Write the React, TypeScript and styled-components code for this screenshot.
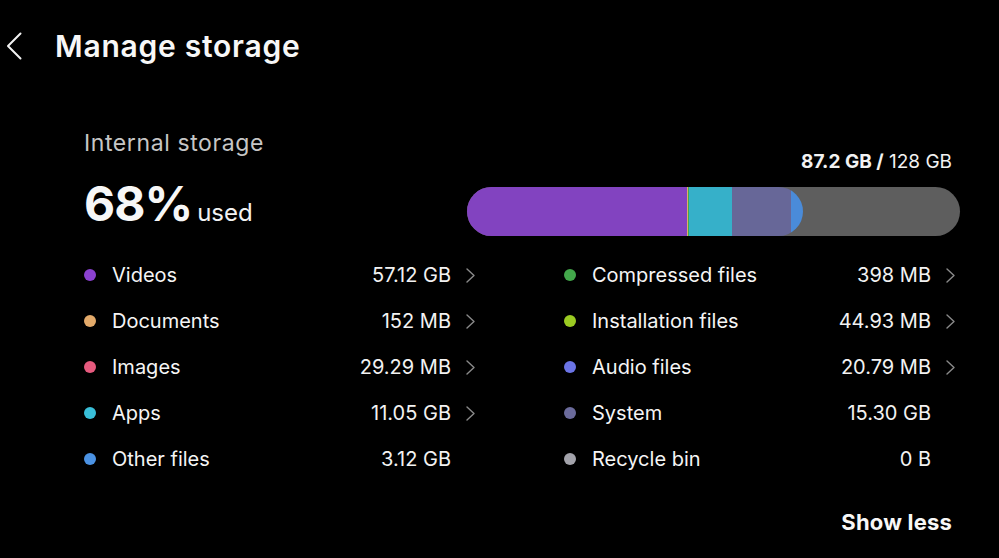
import * as React from 'react';
import styled, {createGlobalStyle} from 'styled-components';

const TOTAL_GB = 128;

interface ICategory {
  name: string;
  size: string;
  gb: number;
  color: string;
  link: boolean;
}

const left: ICategory[] = [
  {name: 'Videos', size: '57.12 GB', gb: 57.12, color: '#8b41d0', link: true},
  {name: 'Documents', size: '152 MB', gb: 0.152, color: '#e3aa6a', link: true},
  {name: 'Images', size: '29.29 MB', gb: 0.029, color: '#e65a7e', link: true},
  {name: 'Apps', size: '11.05 GB', gb: 11.05, color: '#39bfd9', link: true},
  {name: 'Other files', size: '3.12 GB', gb: 3.12, color: '#4b92e3', link: false},
];

const right: ICategory[] = [
  {name: 'Compressed files', size: '398 MB', gb: 0.398, color: '#43a84b', link: true},
  {name: 'Installation files', size: '44.93 MB', gb: 0.045, color: '#9bcb22', link: true},
  {name: 'Audio files', size: '20.79 MB', gb: 0.021, color: '#6b74e6', link: true},
  {name: 'System', size: '15.30 GB', gb: 15.3, color: '#6b6b9c', link: false},
  {name: 'Recycle bin', size: '0 B', gb: 0, color: '#a3a3ab', link: false},
];

// order the segments appear in the bar
const barOrder = [
  'Videos',
  'Documents',
  'Images',
  'Compressed files',
  'Installation files',
  'Audio files',
  'Apps',
  'System',
  'Other files',
];

const barColors: Record<string, string> = {
  Videos: '#8243c0',
  Apps: '#36b0c9',
  System: '#676798',
  'Other files': '#4a8bd9',
};

const GlobalStyle = createGlobalStyle`
  html, body {
    margin: 0;
    background: #000;
  }
  body {
    font-family: Inter, "Noto Sans", "Liberation Sans", sans-serif;
    color: #f7f7f7;
  }
`;

const Chevron = () => (
  <svg width="9" height="15" viewBox="0 0 9 15">
    <polyline
      points="1,1 8,7.5 1,14"
      fill="none"
      stroke="#8a8a8a"
      strokeWidth="1.4"
      strokeLinecap="round"
      strokeLinejoin="round"
    />
  </svg>
);

const Row: React.FC<{item: ICategory}> = ({item}) => (
  <RowWrap>
    <Dot $color={item.color} />
    <Label>{item.name}</Label>
    <Value>{item.size}</Value>
    <ChevronSlot>{item.link && <Chevron />}</ChevronSlot>
  </RowWrap>
);

export default function App() {
  const all = [...left, ...right];
  const used = all.reduce((s, c) => s + c.gb, 0);
  const segments = barOrder.map((n) => all.find((c) => c.name === n)!);

  return (
    <Page>
      <GlobalStyle />
      <Header>
        <BackButton aria-label="Back">
          <svg width="16" height="28" viewBox="0 0 16 28">
            <polyline
              points="14.5,1.5 2,14 14.5,26.5"
              fill="none"
              stroke="#f2f2f2"
              strokeWidth="2"
              strokeLinecap="round"
              strokeLinejoin="round"
            />
          </svg>
        </BackButton>
        <Title>Manage storage</Title>
      </Header>

      <Content>
        <Summary>
          <UsedInfo>
            <Subtitle>Internal storage</Subtitle>
            <Percent>
              <Big>68%</Big>
              <Small>used</Small>
            </Percent>
          </UsedInfo>
          <BarBlock>
            <Capacity>
              <b>87.2 GB /</b> 128 GB
            </Capacity>
            <Track>
              <Used style={{width: `${(used / TOTAL_GB) * 100}%`}}>
                {segments.map((s) => (
                  <Segment
                    key={s.name}
                    $color={barColors[s.name] ?? s.color}
                    style={{width: `${(s.gb / used) * 100}%`}}
                  />
                ))}
              </Used>
            </Track>
          </BarBlock>
        </Summary>

        <List>
          <Column>
            {left.map((c) => (
              <Row key={c.name} item={c} />
            ))}
          </Column>
          <Column>
            {right.map((c) => (
              <Row key={c.name} item={c} />
            ))}
          </Column>
        </List>

        <Footer>
          <ShowLess>Show less</ShowLess>
        </Footer>
      </Content>
    </Page>
  );
}

const Page = styled.div`
  width: 999px;
  height: 558px;
  overflow: hidden;
  background: #000;
`;

const Header = styled.header`
  display: flex;
  align-items: center;
  padding: 32px 0 0 6px;
  height: 28px;
`;

const BackButton = styled.button`
  display: flex;
  background: none;
  border: 0;
  padding: 0;
  width: 16px;
  margin-right: 33px;
`;

const Title = styled.h1`
  margin: 0;
  font-size: 30px;
  line-height: 34px;
  font-weight: 600;
  letter-spacing: 0.75px;
  color: #f7f7f7;
`;

const Content = styled.main`
  padding: 69px 39px 0 84px;
`;

const Summary = styled.section`
  display: grid;
  grid-template-columns: 1fr 493px;
  align-items: start;
`;

const UsedInfo = styled.div`
  display: flex;
  flex-direction: column;
`;

const Subtitle = styled.div`
  font-size: 23px;
  line-height: 28px;
  letter-spacing: 0.6px;
  color: #c6c6c6;
`;

const Percent = styled.div`
  display: flex;
  align-items: baseline;
  gap: 5px;
  margin-top: 19px;
`;

const Big = styled.span`
  font-size: 48px;
  line-height: 56px;
  font-weight: 700;
  letter-spacing: -1px;
`;

const Small = styled.span`
  font-size: 24px;
  color: #f2f2f2;
`;

const BarBlock = styled.div`
  display: flex;
  flex-direction: column;
  align-items: flex-end;
  margin-top: 22px;
`;

const Capacity = styled.div`
  font-size: 19px;
  line-height: 22px;
  margin-right: 8px;
  color: #f2f2f2;

  b {
    font-weight: 700;
  }
`;

const Track = styled.div`
  display: flex;
  width: 100%;
  height: 49px;
  margin-top: 14px;
  border-radius: 25px;
  background: #5e5e5e;
  overflow: hidden;
`;

const Used = styled.div`
  display: flex;
  height: 100%;
  border-radius: 0 25px 25px 0;
  overflow: hidden;
`;

const Segment = styled.div<{$color: string}>`
  height: 100%;
  flex-shrink: 0;
  background: ${(p) => p.$color};
`;

const List = styled.section`
  display: grid;
  grid-template-columns: 391px 391px;
  column-gap: 89px;
  margin-top: 16px;
`;

const Column = styled.div`
  display: flex;
  flex-direction: column;
`;

const RowWrap = styled.div`
  display: flex;
  align-items: center;
  height: 46px;
  font-size: 20px;
`;

const Dot = styled.span<{$color: string}>`
  width: 12px;
  height: 12px;
  border-radius: 50%;
  background: ${(p) => p.$color};
  margin-right: 16px;
  flex-shrink: 0;
`;

const Label = styled.span`
  flex: 1;
  color: #f5f5f5;
`;

const Value = styled.span`
  color: #f2f2f2;
`;

const ChevronSlot = styled.span`
  width: 24px;
  display: flex;
  justify-content: flex-end;
`;

const Footer = styled.footer`
  display: flex;
  justify-content: flex-end;
  margin-top: 26px;
  padding-right: 8px;
`;

const ShowLess = styled.button`
  background: none;
  border: 0;
  padding: 0;
  font-family: inherit;
  font-size: 22px;
  line-height: 28px;
  font-weight: 700;
  letter-spacing: 0.2px;
  color: #f7f7f7;
`;
